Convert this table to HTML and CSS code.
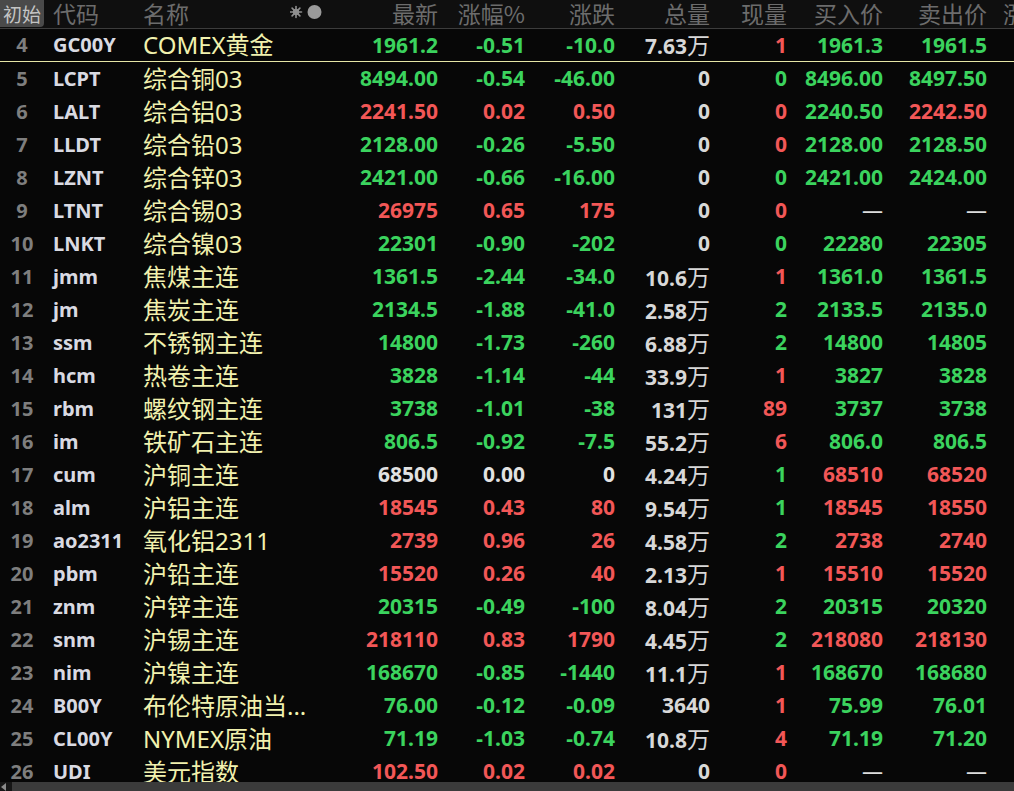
FILE: index.html
```html
<!DOCTYPE html>
<html lang="zh-CN">
<head>
<meta charset="utf-8">
<title>行情列表</title>
<link rel="stylesheet" href="styles.css">
</head>
<body>
<div class="quote">
  <div class="row head">
    <div class="c-idx"><span class="init">初始</span></div>
    <div class="c-code">代码</div>
    <div class="c-name">名称
      <svg class="icons" width="32" height="16" viewBox="0 0 32 16">
        <g stroke="#8e8e8e" stroke-width="1.6" stroke-linecap="round">
          <line x1="6" y1="2.5" x2="6" y2="13.5"/>
          <line x1="0.5" y1="8" x2="11.5" y2="8"/>
          <line x1="2.1" y1="4.1" x2="9.9" y2="11.9"/>
          <line x1="2.1" y1="11.9" x2="9.9" y2="4.1"/>
        </g>
        <circle cx="6" cy="8" r="3.2" fill="#8e8e8e"/>
        <circle cx="24.5" cy="8" r="7" fill="#9a9a9a"/>
      </svg>
    </div>
    <div class="num">最新</div>
    <div class="num">涨幅%</div>
    <div class="num">涨跌</div>
    <div class="num">总量</div>
    <div class="num">现量</div>
    <div class="num">买入价</div>
    <div class="num">卖出价</div>
    <div class="c-more">涨速</div>
  </div>

  <div class="row first">
    <div class="c-idx">4</div><div class="c-code">GC00Y</div><div class="c-name">COMEX黄金</div>
    <div class="num g">1961.2</div><div class="num g">-0.51</div><div class="num g">-10.0</div><div class="num v">7.63<span class="wan">万</span></div><div class="num r">1</div><div class="num g">1961.3</div><div class="num g">1961.5</div><div class="c-more"></div>
  </div>
  <div class="row">
    <div class="c-idx">5</div><div class="c-code">LCPT</div><div class="c-name">综合铜03</div>
    <div class="num g">8494.00</div><div class="num g">-0.54</div><div class="num g">-46.00</div><div class="num v">0</div><div class="num g">0</div><div class="num g">8496.00</div><div class="num g">8497.50</div><div class="c-more"></div>
  </div>
  <div class="row">
    <div class="c-idx">6</div><div class="c-code">LALT</div><div class="c-name">综合铝03</div>
    <div class="num r">2241.50</div><div class="num r">0.02</div><div class="num r">0.50</div><div class="num v">0</div><div class="num r">0</div><div class="num g">2240.50</div><div class="num r">2242.50</div><div class="c-more"></div>
  </div>
  <div class="row">
    <div class="c-idx">7</div><div class="c-code">LLDT</div><div class="c-name">综合铅03</div>
    <div class="num g">2128.00</div><div class="num g">-0.26</div><div class="num g">-5.50</div><div class="num v">0</div><div class="num r">0</div><div class="num g">2128.00</div><div class="num g">2128.50</div><div class="c-more"></div>
  </div>
  <div class="row">
    <div class="c-idx">8</div><div class="c-code">LZNT</div><div class="c-name">综合锌03</div>
    <div class="num g">2421.00</div><div class="num g">-0.66</div><div class="num g">-16.00</div><div class="num v">0</div><div class="num g">0</div><div class="num g">2421.00</div><div class="num g">2424.00</div><div class="c-more"></div>
  </div>
  <div class="row">
    <div class="c-idx">9</div><div class="c-code">LTNT</div><div class="c-name">综合锡03</div>
    <div class="num r">26975</div><div class="num r">0.65</div><div class="num r">175</div><div class="num v">0</div><div class="num r">0</div><div class="num w dash">—</div><div class="num w dash">—</div><div class="c-more"></div>
  </div>
  <div class="row">
    <div class="c-idx">10</div><div class="c-code">LNKT</div><div class="c-name">综合镍03</div>
    <div class="num g">22301</div><div class="num g">-0.90</div><div class="num g">-202</div><div class="num v">0</div><div class="num g">0</div><div class="num g">22280</div><div class="num g">22305</div><div class="c-more"></div>
  </div>
  <div class="row">
    <div class="c-idx">11</div><div class="c-code">jmm</div><div class="c-name">焦煤主连</div>
    <div class="num g">1361.5</div><div class="num g">-2.44</div><div class="num g">-34.0</div><div class="num v">10.6<span class="wan">万</span></div><div class="num r">1</div><div class="num g">1361.0</div><div class="num g">1361.5</div><div class="c-more"></div>
  </div>
  <div class="row">
    <div class="c-idx">12</div><div class="c-code">jm</div><div class="c-name">焦炭主连</div>
    <div class="num g">2134.5</div><div class="num g">-1.88</div><div class="num g">-41.0</div><div class="num v">2.58<span class="wan">万</span></div><div class="num g">2</div><div class="num g">2133.5</div><div class="num g">2135.0</div><div class="c-more"></div>
  </div>
  <div class="row">
    <div class="c-idx">13</div><div class="c-code">ssm</div><div class="c-name">不锈钢主连</div>
    <div class="num g">14800</div><div class="num g">-1.73</div><div class="num g">-260</div><div class="num v">6.88<span class="wan">万</span></div><div class="num g">2</div><div class="num g">14800</div><div class="num g">14805</div><div class="c-more"></div>
  </div>
  <div class="row">
    <div class="c-idx">14</div><div class="c-code">hcm</div><div class="c-name">热卷主连</div>
    <div class="num g">3828</div><div class="num g">-1.14</div><div class="num g">-44</div><div class="num v">33.9<span class="wan">万</span></div><div class="num r">1</div><div class="num g">3827</div><div class="num g">3828</div><div class="c-more"></div>
  </div>
  <div class="row">
    <div class="c-idx">15</div><div class="c-code">rbm</div><div class="c-name">螺纹钢主连</div>
    <div class="num g">3738</div><div class="num g">-1.01</div><div class="num g">-38</div><div class="num v">131<span class="wan">万</span></div><div class="num r">89</div><div class="num g">3737</div><div class="num g">3738</div><div class="c-more"></div>
  </div>
  <div class="row">
    <div class="c-idx">16</div><div class="c-code">im</div><div class="c-name">铁矿石主连</div>
    <div class="num g">806.5</div><div class="num g">-0.92</div><div class="num g">-7.5</div><div class="num v">55.2<span class="wan">万</span></div><div class="num r">6</div><div class="num g">806.0</div><div class="num g">806.5</div><div class="c-more"></div>
  </div>
  <div class="row">
    <div class="c-idx">17</div><div class="c-code">cum</div><div class="c-name">沪铜主连</div>
    <div class="num w">68500</div><div class="num w">0.00</div><div class="num w">0</div><div class="num v">4.24<span class="wan">万</span></div><div class="num g">1</div><div class="num r">68510</div><div class="num r">68520</div><div class="c-more"></div>
  </div>
  <div class="row">
    <div class="c-idx">18</div><div class="c-code">alm</div><div class="c-name">沪铝主连</div>
    <div class="num r">18545</div><div class="num r">0.43</div><div class="num r">80</div><div class="num v">9.54<span class="wan">万</span></div><div class="num g">1</div><div class="num r">18545</div><div class="num r">18550</div><div class="c-more"></div>
  </div>
  <div class="row">
    <div class="c-idx">19</div><div class="c-code">ao2311</div><div class="c-name">氧化铝2311</div>
    <div class="num r">2739</div><div class="num r">0.96</div><div class="num r">26</div><div class="num v">4.58<span class="wan">万</span></div><div class="num g">2</div><div class="num r">2738</div><div class="num r">2740</div><div class="c-more"></div>
  </div>
  <div class="row">
    <div class="c-idx">20</div><div class="c-code">pbm</div><div class="c-name">沪铅主连</div>
    <div class="num r">15520</div><div class="num r">0.26</div><div class="num r">40</div><div class="num v">2.13<span class="wan">万</span></div><div class="num r">1</div><div class="num r">15510</div><div class="num r">15520</div><div class="c-more"></div>
  </div>
  <div class="row">
    <div class="c-idx">21</div><div class="c-code">znm</div><div class="c-name">沪锌主连</div>
    <div class="num g">20315</div><div class="num g">-0.49</div><div class="num g">-100</div><div class="num v">8.04<span class="wan">万</span></div><div class="num g">2</div><div class="num g">20315</div><div class="num g">20320</div><div class="c-more"></div>
  </div>
  <div class="row">
    <div class="c-idx">22</div><div class="c-code">snm</div><div class="c-name">沪锡主连</div>
    <div class="num r">218110</div><div class="num r">0.83</div><div class="num r">1790</div><div class="num v">4.45<span class="wan">万</span></div><div class="num g">2</div><div class="num r">218080</div><div class="num r">218130</div><div class="c-more"></div>
  </div>
  <div class="row">
    <div class="c-idx">23</div><div class="c-code">nim</div><div class="c-name">沪镍主连</div>
    <div class="num g">168670</div><div class="num g">-0.85</div><div class="num g">-1440</div><div class="num v">11.1<span class="wan">万</span></div><div class="num r">1</div><div class="num g">168670</div><div class="num g">168680</div><div class="c-more"></div>
  </div>
  <div class="row">
    <div class="c-idx">24</div><div class="c-code">B00Y</div><div class="c-name">布伦特原油当...</div>
    <div class="num g">76.00</div><div class="num g">-0.12</div><div class="num g">-0.09</div><div class="num v">3640</div><div class="num r">1</div><div class="num g">75.99</div><div class="num g">76.01</div><div class="c-more"></div>
  </div>
  <div class="row">
    <div class="c-idx">25</div><div class="c-code">CL00Y</div><div class="c-name">NYMEX原油</div>
    <div class="num g">71.19</div><div class="num g">-1.03</div><div class="num g">-0.74</div><div class="num v">10.8<span class="wan">万</span></div><div class="num r">4</div><div class="num g">71.19</div><div class="num g">71.20</div><div class="c-more"></div>
  </div>
  <div class="row">
    <div class="c-idx">26</div><div class="c-code">UDI</div><div class="c-name">美元指数</div>
    <div class="num r">102.50</div><div class="num r">0.02</div><div class="num r">0.02</div><div class="num v">0</div><div class="num r">0</div><div class="num w dash">—</div><div class="num w dash">—</div><div class="c-more"></div>
  </div>
</div>
<div class="hscroll"><span class="arrow"></span><span class="track"></span></div>
</body>
</html>
```

FILE: styles.css
```css
html, body {
  margin: 0;
  padding: 0;
  background: #070707;
  width: 1014px;
  height: 791px;
  overflow: hidden;
}
body {
  position: relative;
  font-family: "Noto Sans", "Noto Sans CJK SC", sans-serif;
  color: #dedede;
}
.quote {
  display: flex;
  flex-direction: column;
}
.row {
  display: grid;
  grid-template-columns: 44px 99px 197px 98px 87px 90px 95px 77px 96px 104px 120px;
  height: 33px;
  align-items: center;
  white-space: nowrap;
}
.row.head {
  height: 28px;
  padding-bottom: 0;
  background: #0f0f0f;
  border-bottom: 1px solid #3c3c3c;
  font-family: "Noto Sans CJK SC", sans-serif;
  font-size: 23px;
  line-height: 1;
  color: #6c6c6c;
  align-items: start;
}
.head > div {
  padding-top: 2px;
}
.row.first {
  height: 32px;
  border-bottom: 1px solid #e6e6a6;
}
.c-idx {
  text-align: center;
  font-size: 20px;
  font-weight: 700;
  line-height: 1;
  color: #7e7e7e;
}
.head .c-idx {
  padding-top: 0;
  align-self: stretch;
  text-align: left;
}
.init {
  display: flex;
  align-items: center;
  justify-content: center;
  width: 44px;
  height: 27px;
  background: #4a4a4a;
  color: #c4c4c4;
  font-size: 19px;
  font-weight: 400;
  border-bottom-right-radius: 4px;
}
.c-code {
  padding-left: 9px;
  font-size: 20px;
  font-weight: 700;
  line-height: 1;
  color: #d9dae2;
}
.head .c-code {
  font-size: 23px;
  font-weight: 400;
  color: #6c6c6c;
}
.c-name {
  font-size: 24px;
  color: #f1f1ae;
  line-height: 1;
}
.head .c-name {
  display: flex;
  align-items: center;
  justify-content: space-between;
  padding-right: 18px;
  font-size: 23px;
  color: #6c6c6c;
}
.icons {
  display: block;
  margin-top: -4px;
}
.num {
  text-align: right;
  font-size: 21px;
  font-weight: 700;
  line-height: 1;
}
.head .num {
  font-weight: 400;
  font-size: 23px;
}
.c-more {
  padding-left: 16px;
  overflow: hidden;
}
.g { color: #3bd35e; }
.r { color: #f25757; }
.w { color: #e2e2e2; }
.v { color: #d8d8d8; }
.wan {
  font-family: "Noto Sans CJK SC", sans-serif;
  font-weight: 400;
  font-size: 23px;
  line-height: 1;
}
.dash {
  font-weight: 400;
  color: #dcdcdc;
}
.hscroll {
  position: absolute;
  left: 0;
  right: 0;
  bottom: 0;
  height: 9px;
  display: flex;
  background: #161616;
}
.arrow {
  width: 12px;
  position: relative;
}
.arrow::before {
  content: "";
  position: absolute;
  left: 1px;
  top: 1px;
  border-style: solid;
  border-width: 4px 5px 4px 0;
  border-color: transparent #8a8a8a transparent transparent;
}
.track {
  flex: 1;
  background: #3b3b3b;
}
```
